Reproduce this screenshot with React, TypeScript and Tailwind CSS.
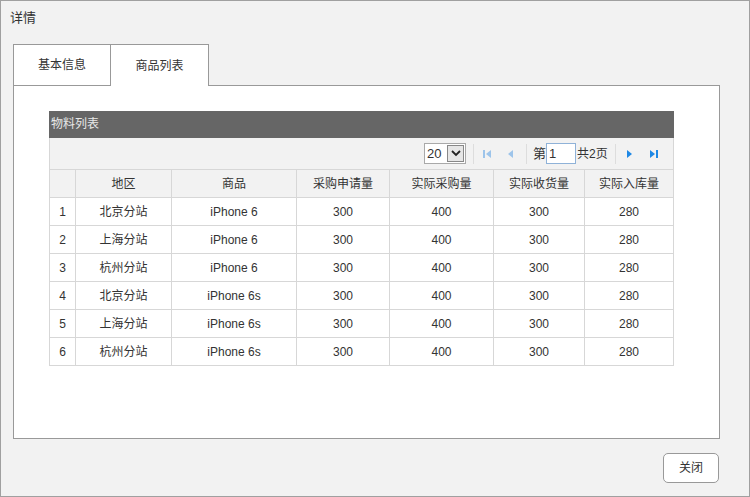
import React from "react";

const rows = [
  ["1", "北京分站", "iPhone 6", "300", "400", "300", "280"],
  ["2", "上海分站", "iPhone 6", "300", "400", "300", "280"],
  ["3", "杭州分站", "iPhone 6", "300", "400", "300", "280"],
  ["4", "北京分站", "iPhone 6s", "300", "400", "300", "280"],
  ["5", "上海分站", "iPhone 6s", "300", "400", "300", "280"],
  ["6", "杭州分站", "iPhone 6s", "300", "400", "300", "280"],
];
const widths = ["w-[26px]", "w-[96px]", "w-[125px]", "w-[93px]", "w-[104px]", "w-[91px]", "w-[89px]"];
const heads = ["", "地区", "商品", "采购申请量", "实际采购量", "实际收货量", "实际入库量"];

const font = { fontFamily: '"Liberation Sans", "Noto Sans CJK SC", sans-serif' };

function Tri({ dir, color, bar }: { dir: "l" | "r"; color: string; bar?: boolean }) {
  return (
    <svg width="10" height="10" viewBox="0 0 10 10" className="block">
      {dir === "l" ? (
        <>
          {bar && <rect x="1" y="1" width="2" height="8" fill={color} />}
          <polygon points={bar ? "9,1 4,5 9,9" : "8,1 3,5 8,9"} fill={color} />
        </>
      ) : (
        <>
          <polygon points={bar ? "1,1 6,5 1,9" : "2,1 7,5 2,9"} fill={color} />
          {bar && <rect x="7" y="1" width="2" height="8" fill={color} />}
        </>
      )}
    </svg>
  );
}

export default function App() {
  return (
    <div
      className="w-[750px] h-[497px] border border-[#a0a0a0] bg-[#f2f2f2] text-[#333] flex flex-col"
      style={font}
    >
      <div className="h-[43px] pl-[9px] pt-[7px] text-[13px] leading-[20px]">详情</div>
      <div className="ml-[12px] flex items-start">
        <div className="w-[98px] h-[41px] border-l border-t border-r border-[#999] bg-white flex items-center justify-center text-[12px]">
          基本信息
        </div>
        <div className="relative z-10 w-[98px] h-[42px] -mb-px border-t border-r border-[#999] bg-white flex items-center justify-center text-[12px]">
          商品列表
        </div>
      </div>
      <div className="ml-[12px] w-[707px] h-[354px] border border-[#999] bg-white pl-[35px] pt-[25px]">
        <div className="w-[625px]">
          <div className="h-[27px] bg-[#666] text-[#e8e8e8] text-[12px] leading-[27px] pl-[2px]">物料列表</div>
          <div className="h-[31px] bg-[#f2f2f2] border-l border-r border-[#d7d7d7] flex items-center text-[12px] pl-[374px]">
            <div className="w-[42px] h-[21px] border border-[#a9a9a9] bg-white flex items-center pl-[2px] text-[13px]">
              <span>20</span>
              <div className="ml-auto mr-px w-[17px] h-[17px] border border-[#888] bg-[#e6e6e6] flex items-center justify-center">
                <svg width="10" height="7" viewBox="0 0 10 7">
                  <polyline points="1,1 5,5 9,1" fill="none" stroke="#222" strokeWidth="1.8" />
                </svg>
              </div>
            </div>
            <div className="ml-[7px] w-px h-[20px] bg-[#ddd]" />
            <div className="ml-[8px]"><Tri dir="l" bar color="#9dc4ea" /></div>
            <div className="ml-[13px]"><Tri dir="l" color="#9dc4ea" /></div>
            <div className="ml-[11px] w-px h-[20px] bg-[#ddd]" />
            <span className="ml-[6px] text-[13px]">第</span>
            <div className="w-[30px] h-[21px] border border-[#8fb2d8] bg-white text-[13px] leading-[19px] pl-[2px]">1</div>
            <span className="ml-[1px] text-[12px]">共2页</span>
            <div className="ml-[7px] w-px h-[20px] bg-[#ddd]" />
            <div className="ml-[9px]"><Tri dir="r" color="#1e88e5" /></div>
            <div className="ml-[14px]"><Tri dir="r" bar color="#1e88e5" /></div>
          </div>
          <table className="border-collapse table-fixed w-[625px] text-[12px]">
            <thead>
              <tr className="h-[28px] bg-[#f2f2f2]">
                {heads.map((h, i) => (
                  <th key={i} className={`${widths[i]} border border-[#d7d7d7] font-normal text-center p-0`}>
                    {h}
                  </th>
                ))}
              </tr>
            </thead>
            <tbody>
              {rows.map((r, ri) => (
                <tr key={ri} className="h-[28px] bg-white">
                  {r.map((c, ci) => (
                    <td key={ci} className={`${widths[ci]} border border-[#d7d7d7] text-center p-0`}>
                      {c}
                    </td>
                  ))}
                </tr>
              ))}
            </tbody>
          </table>
        </div>
      </div>
      <div className="flex justify-end pr-[30px] pt-[14px]">
        <button className="w-[56px] h-[30px] rounded-[5px] border border-[#999] bg-white text-[12px] text-[#333]">
          关闭
        </button>
      </div>
    </div>
  );
}
